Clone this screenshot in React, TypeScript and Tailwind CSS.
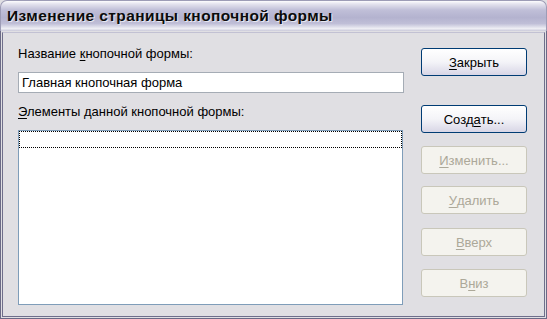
import React from "react";

function Btn({ label, u, enabled }: { label: string; u: number; enabled?: boolean }) {
  const before = label.slice(0, u);
  const mid = label.slice(u, u + 1);
  const after = label.slice(u + 1);
  return (
    <button
      className={`w-[106px] h-[28px] rounded-[3px] border text-[13px] leading-none flex items-center justify-center ${
        enabled
          ? "border-[#003c74] bg-gradient-to-b from-[#ffffff] via-[#f4f4f8] to-[#d8d6e6] text-black"
          : "border-[#c9c7ba] bg-[#f4f3ee] text-[#aca899]"
      }`}
    >
      {before}
      <span className="underline underline-offset-2">{mid}</span>
      {after}
    </button>
  );
}

export default function App() {
  return (
    <div className="w-[547px] h-[319px] flex flex-col font-['Liberation_Sans',Arial,sans-serif] bg-[#e0dfe3]">
      {/* Title bar */}
      <div className="h-[31px] rounded-t-[7px] border border-b-0 border-[#9d9cb6] bg-[linear-gradient(to_bottom,#fdfdfe_0%,#e4e3ee_10%,#c0bfd8_30%,#b4b3cf_55%,#bfbed7_75%,#eeeef4_92%,#c9c8d9_100%)] flex items-center pl-[6px]">
        <span className="text-[15.5px] font-bold text-[#0b0b0b] tracking-[0.4px] [text-shadow:1px_1px_0_#e8e8f0]">
          Изменение страницы кнопочной формы
        </span>
      </div>

      {/* Body */}
      <div className="flex-1 border border-t-0 border-[#6b6a86] p-[1px]">
        <div className="h-full border-[1.5px] border-t-[#c2c1d3] border-[#6f6e8b] border-t-[1px] flex">
          {/* Left column */}
          <div className="flex flex-col pl-[15px] pt-[13px] w-[402px]">
            <div className="text-[13px] leading-[16px] text-black">
              Название <span className="underline underline-offset-2">к</span>нопочной формы:
            </div>
            <div className="mt-[10px] h-[21px] w-[386px] border border-[#a5acb5] bg-white flex items-center pl-[3px] text-[13px] text-black">
              Главная кнопочная форма
            </div>
            <div className="mt-[11px] text-[13px] leading-[16px] text-black">
              <span className="underline underline-offset-2">Э</span>лементы данной кнопочной формы:
            </div>
            <div className="mt-[10px] h-[175px] w-[385px] border border-[#7f9db9] bg-white">
              <div className="h-[17px] border border-dotted border-black"></div>
            </div>
          </div>

          {/* Right column */}
          <div className="flex flex-col pl-[16px] pt-[15px]">
            <Btn label="Закрыть" u={0} enabled />
            <div className="mt-[29px]">
              <Btn label="Создать..." u={4} enabled />
            </div>
            <div className="mt-[13px]">
              <Btn label="Изменить..." u={0} />
            </div>
            <div className="mt-[12px]">
              <Btn label="Удалить" u={0} />
            </div>
            <div className="mt-[14px]">
              <Btn label="Вверх" u={0} />
            </div>
            <div className="mt-[13px]">
              <Btn label="Вниз" u={1} />
            </div>
          </div>
        </div>
      </div>
    </div>
  );
}
